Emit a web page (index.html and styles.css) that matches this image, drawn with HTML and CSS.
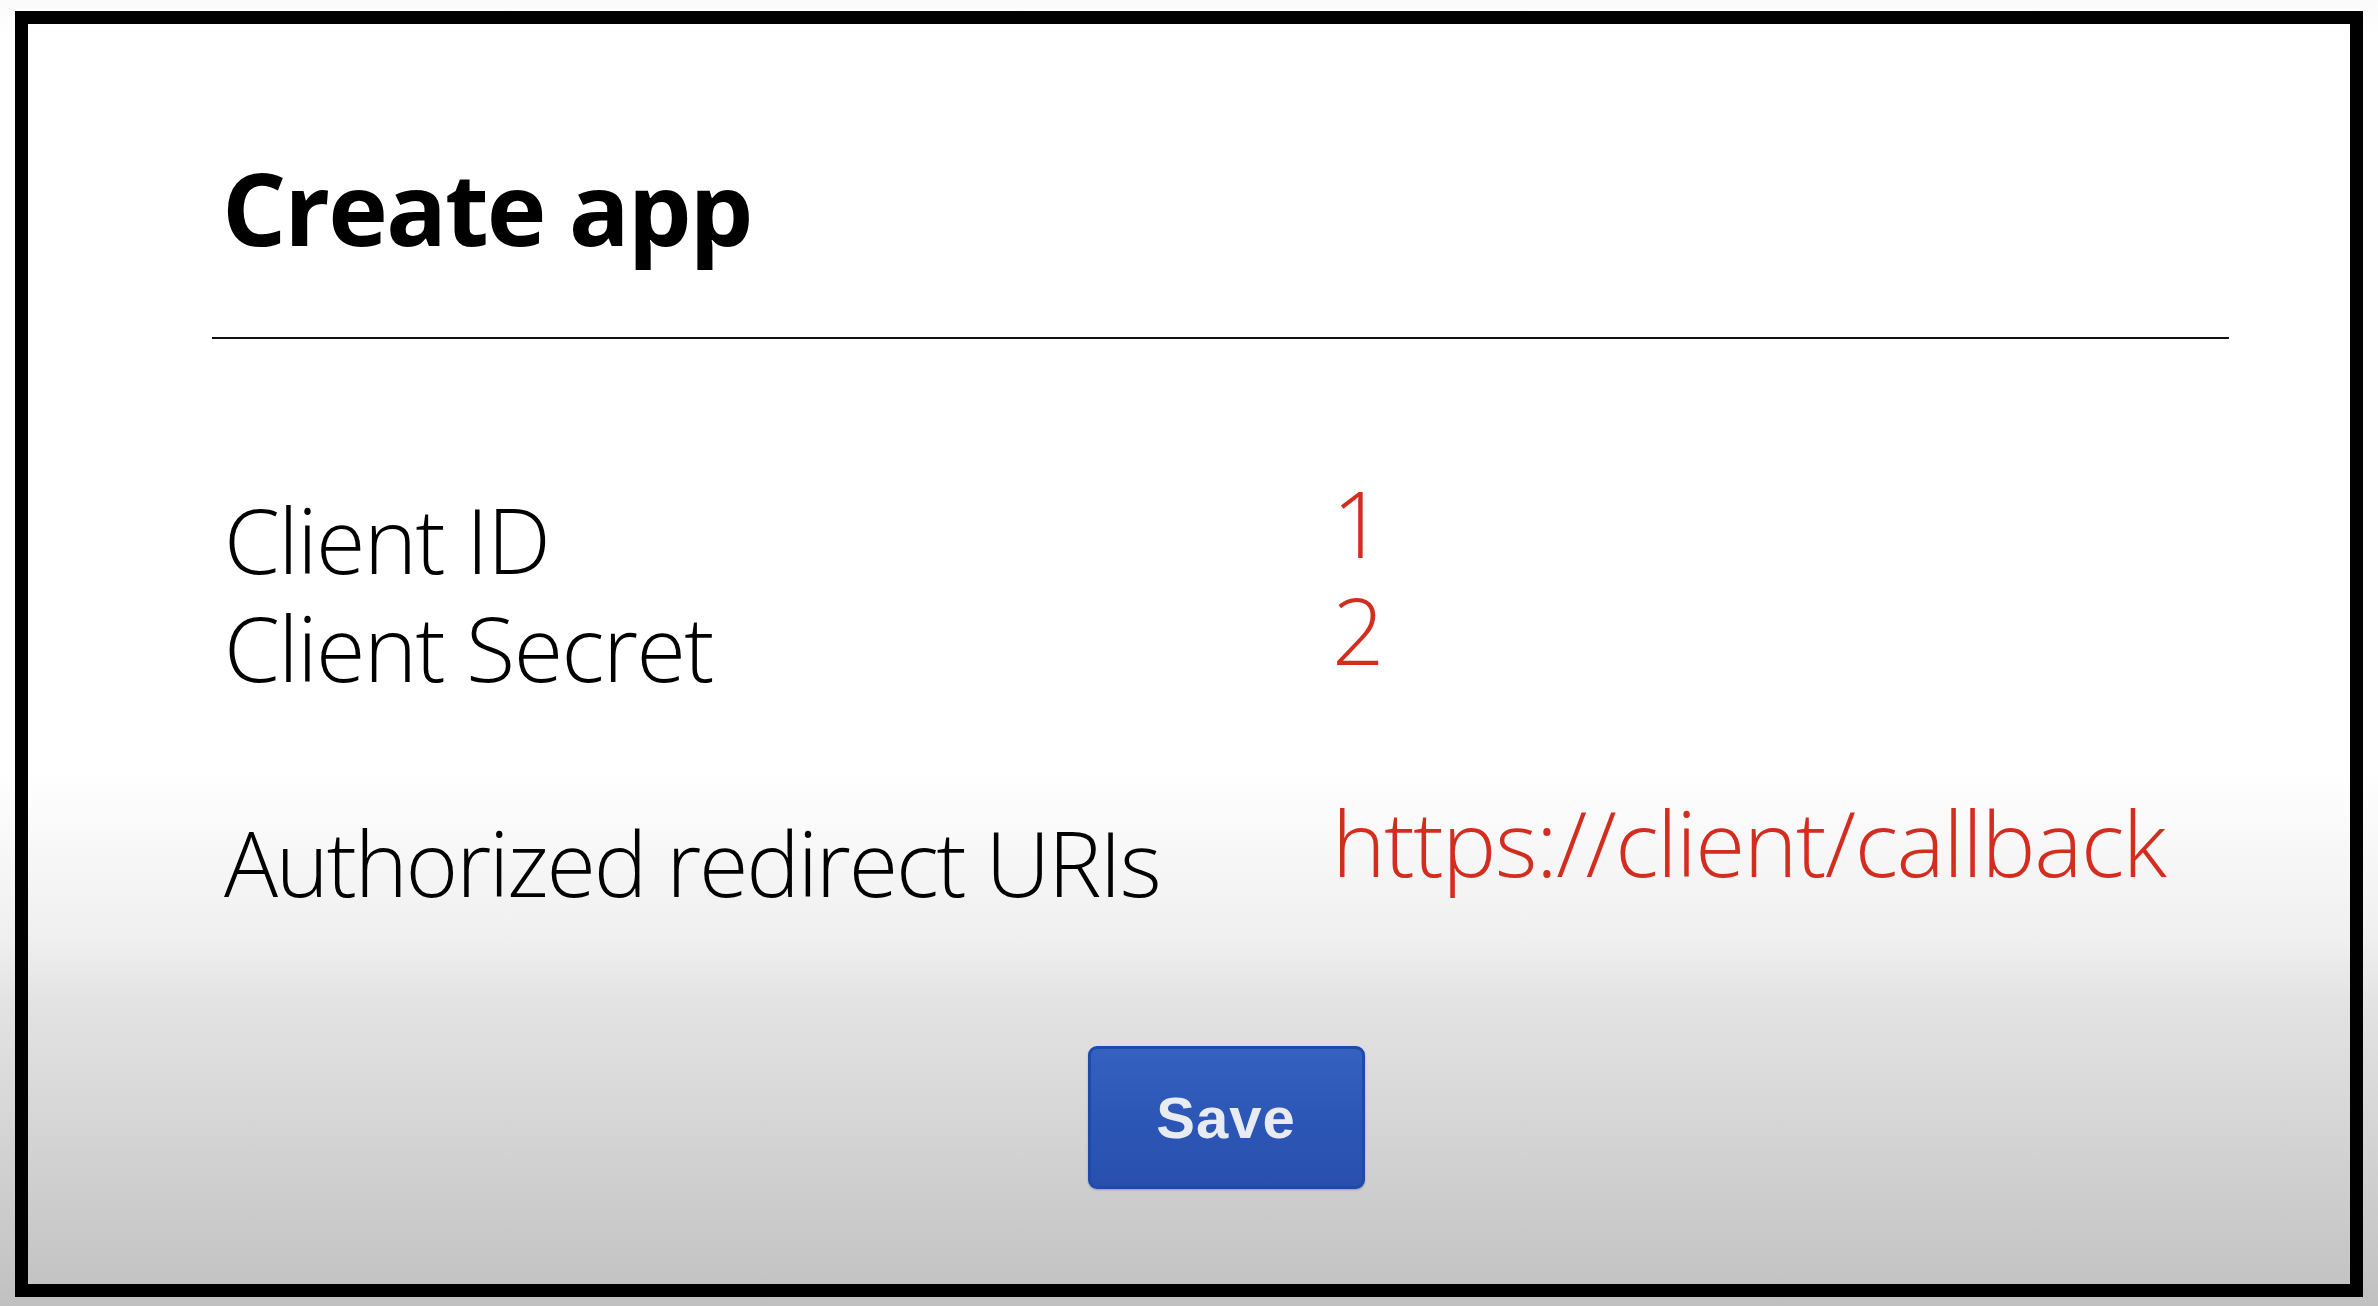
FILE: index.html
```html
<!DOCTYPE html>
<html lang="en">
<head>
<meta charset="utf-8">
<title>Create app</title>
<link rel="stylesheet" href="styles.css">
</head>
<body>
<div class="frame">
  <h1 class="title">Create app</h1>
  <hr class="rule">
  <div class="pair">
    <div class="labels">
      <div class="label">Client ID</div>
      <div class="label">Client Secret</div>
    </div>
    <div class="values values-up">
      <div class="value">1</div>
      <div class="value">2</div>
    </div>
  </div>
  <div class="pair pair-uri">
    <div class="labels">
      <div class="label">Authorized redirect URIs</div>
    </div>
    <div class="values values-up-small">
      <div class="value url">https://client/callback</div>
    </div>
  </div>
  <div class="actions">
    <button class="save" type="button">Save</button>
  </div>
</div>
</body>
</html>
```

FILE: styles.css
```css
html, body {
  margin: 0;
  padding: 0;
}

body {
  width: 2378px;
  height: 1306px;
  overflow: hidden;
  background: linear-gradient(to bottom,
    #fbfbfb 0px,
    #ffffff 40px,
    #ffffff 770px,
    #efefef 940px,
    #e3e3e3 1000px,
    #d8d8d8 1100px,
    #c4c4c4 1280px,
    #c0c0c0 1306px);
  font-family: "Open Sans", "Noto Sans", sans-serif;
  color: #000;
}

.frame {
  box-sizing: border-box;
  margin: 11px 15px 0 15px;
  width: 2348px;
  height: 1286px;
  border: 13px solid #000;
  padding: 122px 0 0 0;
  display: flex;
  flex-direction: column;
}

.title {
  margin: 0 0 0 194px;
  font-size: 101px;
  line-height: 122px;
  font-weight: 700;
  letter-spacing: -2px;
}

.rule {
  margin: 69px 121px 0 184px;
  border: 0;
  height: 2px;
  background: #111;
}

.pair {
  display: flex;
  margin-top: 146px;
  padding-left: 196px;
}

.pair-uri {
  margin-top: 107px;
}

.labels {
  width: 1108px;
  display: flex;
  flex-direction: column;
}

.label {
  font-size: 90px;
  line-height: 108px;
  font-weight: 300;
  letter-spacing: -1.5px;
  white-space: nowrap;
}

.pair-uri .label {
  letter-spacing: -2.2px;
}

.values {
  display: flex;
  flex-direction: column;
  color: #d22d1f;
}

.values-up {
  margin-top: -16px;
}

.values-up-small {
  margin-top: -19px;
}

.value {
  font-size: 92px;
  line-height: 107px;
  font-weight: 300;
  white-space: nowrap;
}

.url {
  font-size: 91px;
  letter-spacing: -1.45px;
}

.actions {
  display: flex;
  justify-content: center;
  padding-left: 74px;
  margin-top: 130px;
}

.save {
  box-sizing: border-box;
  width: 277px;
  height: 143px;
  border: 3px solid #1d4aab;
  border-radius: 9px;
  background: linear-gradient(to bottom, #3561c0 0%, #2c56b5 55%, #284fae 100%);
  box-shadow: 0 1px 2px rgba(0, 0, 0, 0.25);
  color: #e9ebf2;
  font-family: "Liberation Sans", Arial, sans-serif;
  font-weight: 700;
  font-size: 58px;
  letter-spacing: 1px;
  padding: 0;
  cursor: pointer;
}
```
